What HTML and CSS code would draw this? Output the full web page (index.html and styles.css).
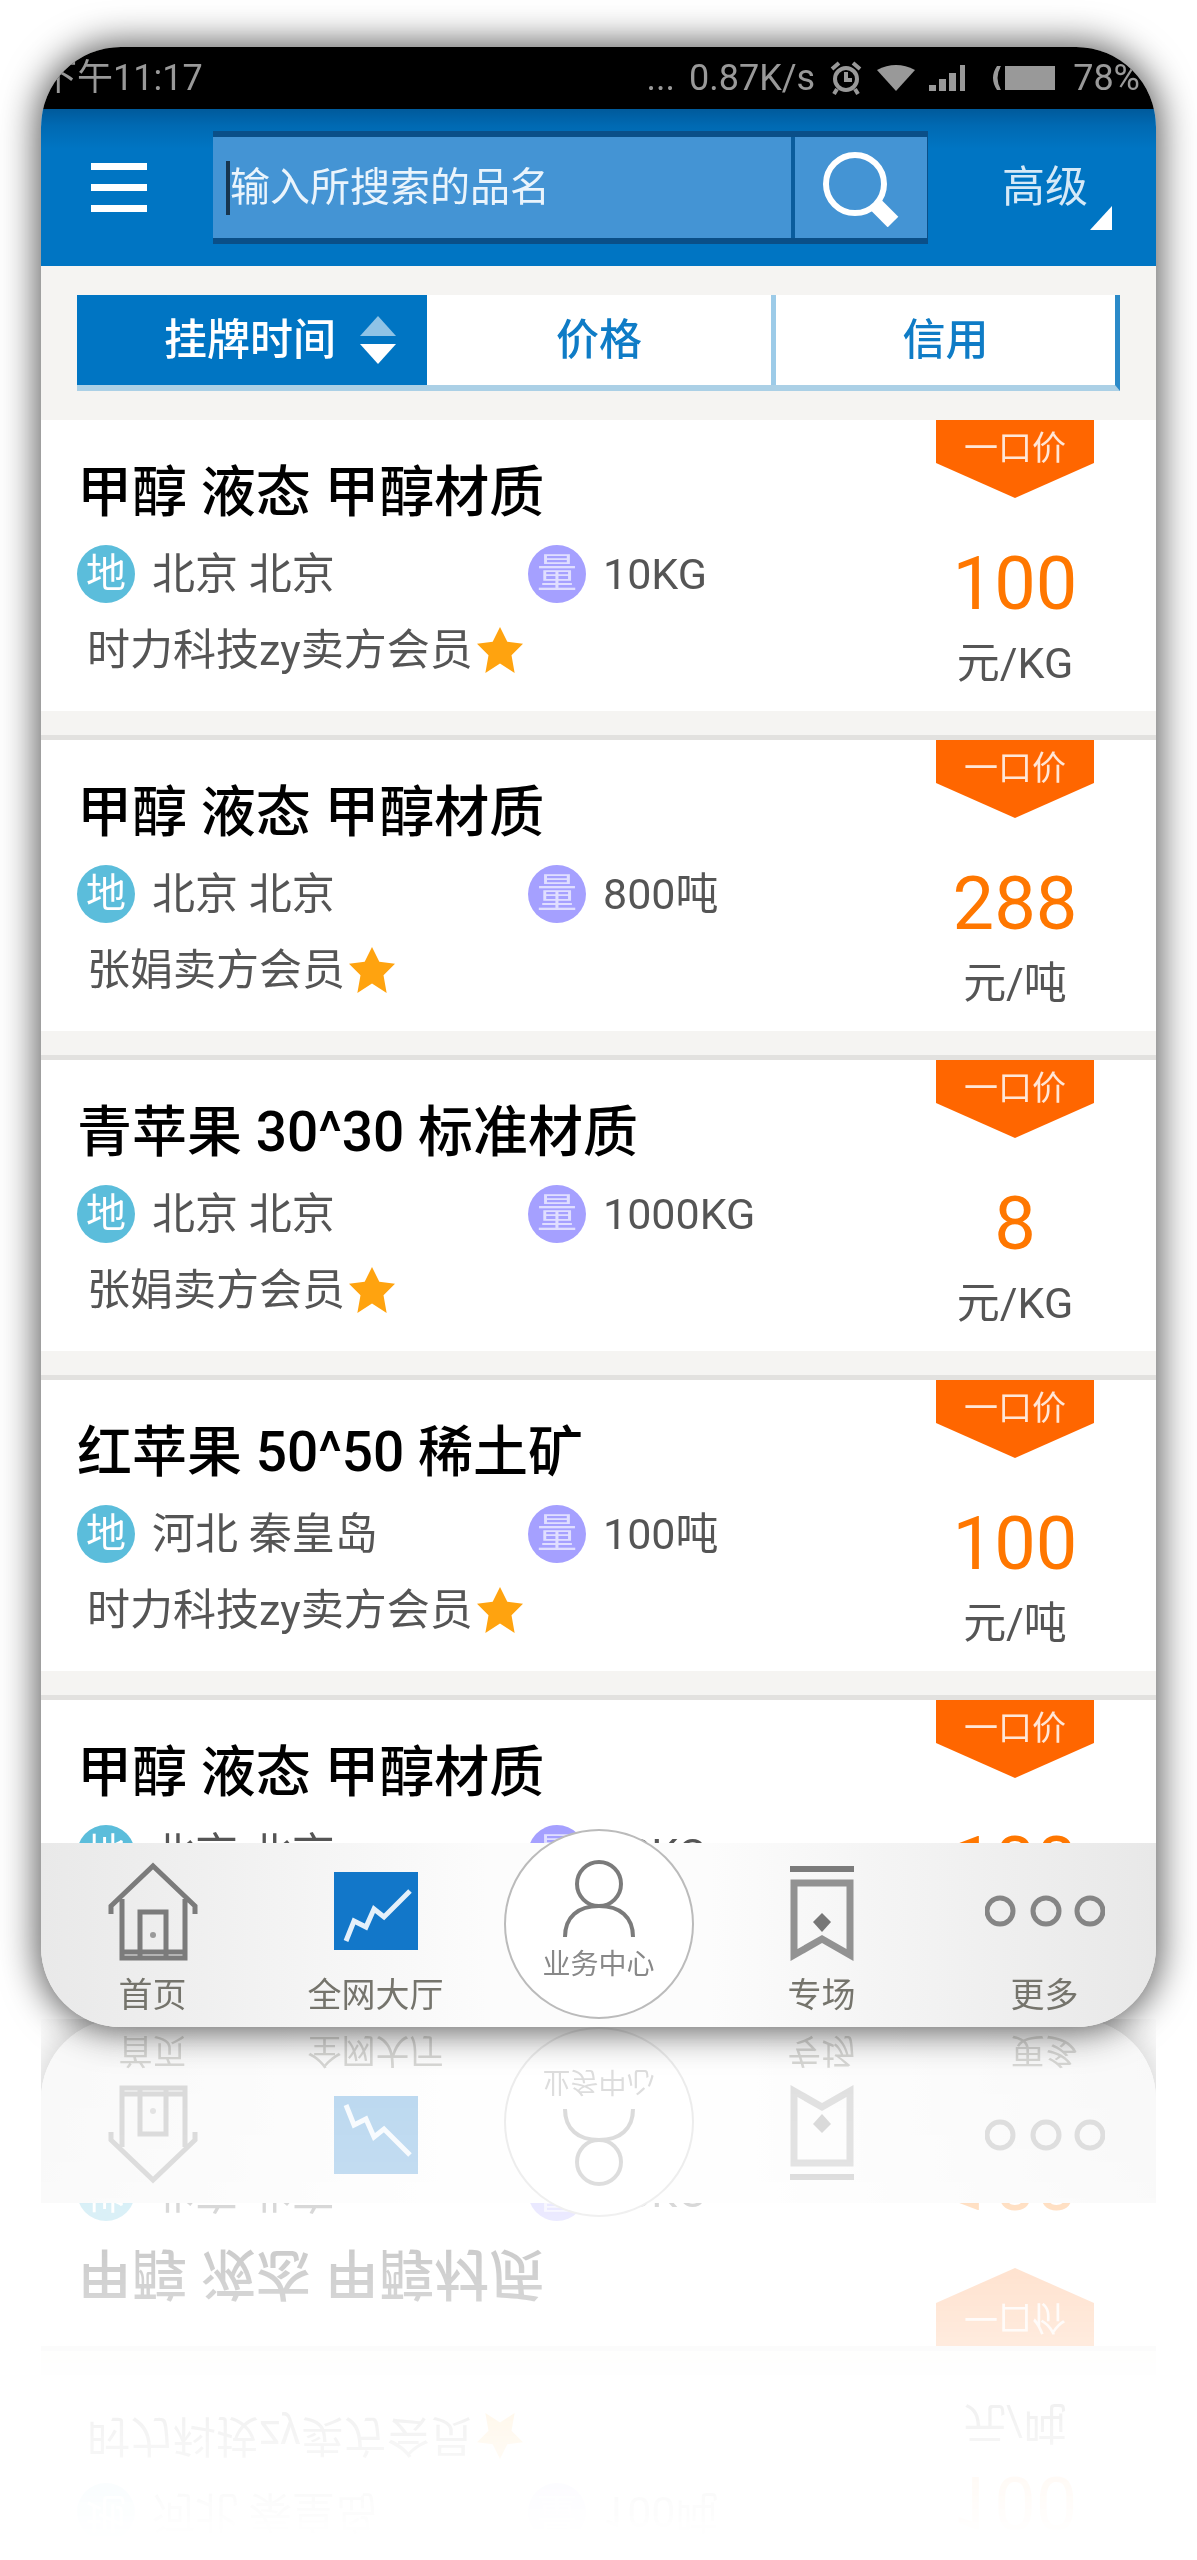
FILE: index.html
```html
<!DOCTYPE html>
<html lang="zh-CN">
<head>
<meta charset="utf-8">
<meta name="viewport" content="width=device-width, initial-scale=1">
<title>全网大厅</title>
<link rel="stylesheet" href="styles.css">
</head>
<body>
<div class="phone">
  <div class="status">
    <span class="status-time">下午11:17</span>
    <span>...</span>
    <span>0.87K/s</span>
    <svg width="34" height="36" viewBox="0 0 34 36" fill="none" stroke="currentColor" stroke-width="4"><circle cx="17" cy="19" r="11"/><path d="M17 12v8h6M3 9l7-6M31 9l-7-6M8 29l-3 5M26 29l3 5"/></svg>
    <svg width="38" height="26" viewBox="0 0 38 26" fill="currentColor"><path d="M0 5Q19-5 38 5L19 26Z"/></svg>
    <svg width="46" height="26" viewBox="0 0 46 26" fill="currentColor"><path d="M0 20h7v6H0zM10 14h7v12h-7zM20 8h7v18h-7zM31 0h5v26h-5z"/></svg>
    <svg width="70" height="26" viewBox="0 0 70 26" fill="currentColor"><path d="M8 1Q0 13 8 25h4Q5 13 12 1zM16 1h50v24H16z"/></svg>
    <span>78%</span>
  </div>

  <header class="header">
    <button class="menu" aria-label="菜单"><i></i><i></i><i></i></button>
    <form class="search">
      <span class="caret"></span>
      <input class="search-input" type="text" aria-label="搜索" placeholder="输入所搜索的品名">
      <button class="search-button" type="button" aria-label="搜索">
        <svg width="78" height="78" viewBox="0 0 78 78" fill="none" stroke="#fff"><circle cx="33" cy="35" r="29" stroke-width="6"/><path d="M54 56L71 73" stroke-width="15"/></svg>
      </button>
    </form>
    <button class="advanced">高级<svg width="24" height="24" viewBox="0 0 24 24" fill="#fff"><path d="M24 0V24H2z"/></svg></button>
  </header>

  <main class="list">
    <div class="filter">
      <button class="filter-tab is-active">挂牌时间<svg width="36" height="48" viewBox="0 0 36 48"><path d="M18 0L36 20H0z" fill="#8fc3e6"/><path d="M18 48L36 28H0z" fill="#fff"/></svg></button>
      <button class="filter-tab">价格</button>
      <button class="filter-tab">信用</button>
    </div>

    <article class="card">
      <div class="info">
        <h2 class="title">甲醇 液态 甲醇材质</h2>
        <div class="meta"><span class="dot place">地</span><span class="where">北京 北京</span><span class="dot amount">量</span><span>10KG</span></div>
        <p class="seller">时力科技zy卖方会员<svg class="star" viewBox="0 0 44 44"><path d="M22 0L29 14 44 16 33 27 36 44 22 35 8 44 11 27 0 16 15 14z"/></svg></p>
      </div>
      <div class="offer"><span class="flag">一口价</span><strong class="price">100</strong><span class="unit">元/KG</span></div>
    </article>

    <article class="card">
      <div class="info">
        <h2 class="title">甲醇 液态 甲醇材质</h2>
        <div class="meta"><span class="dot place">地</span><span class="where">北京 北京</span><span class="dot amount">量</span><span>800吨</span></div>
        <p class="seller">张娟卖方会员<svg class="star" viewBox="0 0 44 44"><path d="M22 0L29 14 44 16 33 27 36 44 22 35 8 44 11 27 0 16 15 14z"/></svg></p>
      </div>
      <div class="offer"><span class="flag">一口价</span><strong class="price">288</strong><span class="unit">元/吨</span></div>
    </article>

    <article class="card">
      <div class="info">
        <h2 class="title">青苹果 30^30 标准材质</h2>
        <div class="meta"><span class="dot place">地</span><span class="where">北京 北京</span><span class="dot amount">量</span><span>1000KG</span></div>
        <p class="seller">张娟卖方会员<svg class="star" viewBox="0 0 44 44"><path d="M22 0L29 14 44 16 33 27 36 44 22 35 8 44 11 27 0 16 15 14z"/></svg></p>
      </div>
      <div class="offer"><span class="flag">一口价</span><strong class="price">8</strong><span class="unit">元/KG</span></div>
    </article>

    <article class="card">
      <div class="info">
        <h2 class="title">红苹果 50^50 稀土矿</h2>
        <div class="meta"><span class="dot place">地</span><span class="where">河北 秦皇岛</span><span class="dot amount">量</span><span>100吨</span></div>
        <p class="seller">时力科技zy卖方会员<svg class="star" viewBox="0 0 44 44"><path d="M22 0L29 14 44 16 33 27 36 44 22 35 8 44 11 27 0 16 15 14z"/></svg></p>
      </div>
      <div class="offer"><span class="flag">一口价</span><strong class="price">100</strong><span class="unit">元/吨</span></div>
    </article>

    <article class="card">
      <div class="info">
        <h2 class="title">甲醇 液态 甲醇材质</h2>
        <div class="meta"><span class="dot place">地</span><span class="where">北京 北京</span><span class="dot amount">量</span><span>10KG</span></div>
      </div>
      <div class="offer"><span class="flag">一口价</span><strong class="price">100</strong></div>
    </article>
  </main>

  <nav class="tabbar">
    <a class="tab" href="#"><svg width="90" height="100" viewBox="0 0 90 100" fill="none" stroke="#7b7b7b" stroke-width="5"><path d="M3 53V45L45 5 87 45V53M14 38V97H77V38M32 95V51H58V95M14 91H77"/><circle cx="45" cy="74" r="3" fill="#999" stroke="none"/></svg><span>首页</span></a>
    <a class="tab" href="#"><svg width="84" height="100" viewBox="0 0 84 100"><path fill="#1277c9" d="M0 11H84V89H0z"/><path d="M12 80L20 60 32 66 40 48 50 56 76 30" fill="none" stroke="#e4f0fa" stroke-width="5"/></svg><span>全网大厅</span></a>
    <a class="tab center" href="#"><svg width="74" height="80" viewBox="0 0 74 80" fill="none" stroke="#7b7b7b" stroke-width="4"><circle cx="37" cy="25" r="22"/><path d="M3 78C3 58 16 47 37 47S71 58 71 78"/></svg><span>业务中心</span></a>
    <a class="tab" href="#"><svg width="64" height="100" viewBox="0 0 64 100" fill="none"><path stroke="#7b7b7b" stroke-width="6" d="M0 8H64"/><path stroke="#929292" stroke-width="7" d="M4 94V22H60V94L32 78Z"/><path fill="#777" d="M32 52L41 61 32 71 23 61Z"/></svg><span>专场</span></a>
    <a class="tab" href="#"><svg width="120" height="100" viewBox="0 0 120 100" fill="none" stroke="#858585" stroke-width="5"><circle cx="15" cy="50" r="13"/><circle cx="61" cy="50" r="13"/><circle cx="105" cy="50" r="13"/></svg><span>更多</span></a>
  </nav>
</div>
</body>
</html>
```
FILE: styles.css
```css
* {
  box-sizing: border-box;
}

body {
  min-height: 100vh;
  margin: 0;
  padding: 47px 41px 0;
  background: #fff;
  color: #555;
  font-family: Roboto, "Noto Sans CJK SC", sans-serif;
  font-size: 43px;
  line-height: 1;
}

button,
input {
  margin: 0;
  padding: 0;
  border: 0;
  border-radius: 0;
  background: none;
  color: inherit;
  font: inherit;
}

svg {
  flex: none;
}

.phone {
  display: flex;
  flex-direction: column;
  height: calc(100vh - 580px);
  min-height: 1000px;
  overflow: hidden;
  border-radius: 80px;
  background: #f5f4f2;
  box-shadow: 0 0 36px 4px rgba(0, 0, 0, .65);
  -webkit-box-reflect: below -8px linear-gradient(to top, rgba(0, 0, 0, .3) 0, rgba(0, 0, 0, .26) 150px, rgba(0, 0, 0, .15) 300px, rgba(0, 0, 0, .06) 420px, transparent 520px);
}

/* status bar */
.status {
  display: flex;
  flex: none;
  align-items: center;
  gap: 14px;
  height: 62px;
  padding-right: 16px;
  background: #000;
  color: #999;
  font-size: 36px;
}

.status-time {
  margin-right: auto;
}

/* header */
.header {
  display: flex;
  flex: none;
  align-items: center;
  height: 157px;
  padding: 0 44px 0 50px;
  background: linear-gradient(#005a9b, #0069b2 16px, #0075c3 40px);
  color: #fff;
}

.menu {
  display: grid;
  gap: 14px;
  width: 56px;
  margin-right: 66px;
}

.menu i {
  height: 7px;
  background: #fff;
}

.search {
  display: flex;
  flex: 1;
  align-items: center;
  min-width: 0;
  height: 113px;
  border: solid #0a4f88;
  border-width: 6px 1px 6px 0;
  background: #4494d4;
}

.caret {
  width: 4px;
  height: 54px;
  margin-left: 13px;
  background: #16354f;
}

.search-input {
  flex: 1;
  min-width: 0;
  height: 60px;
  font-size: 40px;
}

.search-input::placeholder {
  color: #eaf4fc;
  opacity: 1;
}

.search-button {
  display: grid;
  place-items: center;
  align-self: stretch;
  width: 136px;
  border-left: 4px solid #0a5c9c;
}

.advanced {
  display: flex;
  align-items: center;
  margin-left: 74px;
  color: #d5e9f7;
}

.advanced svg {
  margin-top: 60px;
}

/* filter */
.list {
  flex: 1;
  min-height: 0;
  overflow: hidden;
}

.filter {
  display: grid;
  grid-template-columns: 350fr 349fr 339fr;
  height: 96px;
  margin: 29px 36px;
  border-right: 5px solid #2b8ac8;
  border-bottom: 6px solid #abd0e6;
  background: #fff;
}

.filter-tab {
  display: flex;
  align-items: center;
  justify-content: center;
  gap: 24px;
  color: #0f7cc6;
  font-weight: 500;
}

.filter-tab + .filter-tab {
  border-right: 5px solid #9ccbe8;
}

.filter-tab:last-child {
  border-right: 0;
}

.filter-tab.is-active {
  padding-left: 56px;
  background: #0075c3;
  color: #fff;
}

/* cards */
.card {
  display: flex;
  height: 291px;
  margin-bottom: 24px;
  padding: 0 62px 0 36px;
  background: #fff;
}

.card + .card {
  height: 296px;
  border-top: 5px solid #e2e1df;
}

.info {
  flex: 1;
}

.title {
  margin: 42px 0 22px;
  color: #000;
  font-size: 55px;
  font-weight: 500;
  line-height: 60px;
}

.meta {
  display: flex;
  align-items: center;
  height: 60px;
}

.dot {
  display: grid;
  place-items: center;
  width: 58px;
  height: 58px;
  margin-right: 17px;
  border-radius: 50%;
  color: #fff;
  font-size: 40px;
}

.place {
  background: #5bbddb;
}

.amount {
  background: #a5a0ff;
  color: #e0deff;
}

.where {
  width: 376px;
}

.seller {
  display: flex;
  align-items: center;
  gap: 4px;
  height: 60px;
  margin: 16px 0 0 10px;
}

.star {
  width: 46px;
  height: 46px;
  fill: #ffa30f;
}

.offer {
  display: flex;
  flex-direction: column;
  align-items: center;
  width: 158px;
}

.flag {
  flex: none;
  width: 158px;
  height: 78px;
  background: #ff6600;
  clip-path: polygon(0 0, 100% 0, 100% 55%, 50% 100%, 0 55%);
  color: #ffe6d6;
  font-size: 34px;
  line-height: 56px;
  text-align: center;
}

.price {
  margin-top: 46px;
  color: #ff7700;
  font-size: 74px;
  font-weight: 400;
  line-height: 80px;
}

.unit {
  margin-top: 18px;
}

/* bottom navigation */
.tabbar {
  display: grid;
  flex: none;
  grid-template-columns: repeat(5, 1fr);
  height: 184px;
  background: linear-gradient(to right, #e9e9e9, #fcfcfc 40%, #fcfcfc 60%, #e8e8e8);
  font-size: 34px;
}

.tab {
  display: flex;
  flex-direction: column;
  align-items: center;
  gap: 17px;
  padding-top: 18px;
  color: #75746c;
  text-decoration: none;
}

.center {
  justify-self: center;
  gap: 12px;
  width: 190px;
  height: 190px;
  margin-top: -14px;
  padding-top: 28px;
  border: 2px solid #bbb;
  border-radius: 50%;
  background: #fff;
  color: #888;
  font-size: 28px;
}
```
